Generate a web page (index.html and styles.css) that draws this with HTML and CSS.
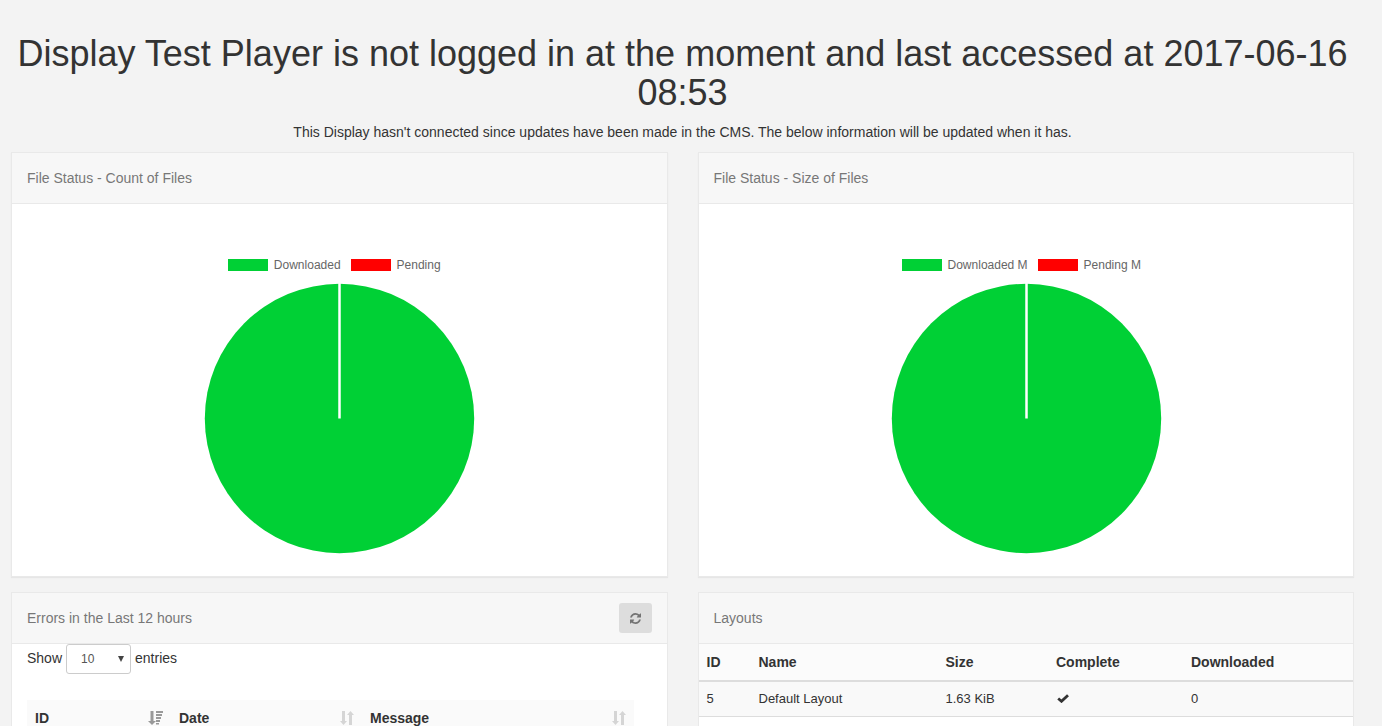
FILE: index.html
```html
<!DOCTYPE html>
<html lang="en">
<head>
<meta charset="utf-8">
<title>Display Test Player</title>
<link rel="stylesheet" href="styles.css">
</head>
<body>
<main class="page">
  <header class="intro">
    <h1 class="title">Display Test Player is not logged in at the moment and last accessed at 2017-06-16 08:53</h1>
    <p class="note">This Display hasn't connected since updates have been made in the CMS. The below information will be updated when it has.</p>
  </header>
  <div class="grid">
    <section class="widget chart-widget">
      <div class="widget-title">File Status - Count of Files</div>
      <div class="chart">
        <div class="legend">
          <span class="key"><i class="swatch green"></i>Downloaded</span>
          <span class="key"><i class="swatch red"></i>Pending</span>
        </div>
        <svg class="pie" viewBox="0 0 271 271"><circle cx="135.5" cy="135.5" r="134.7" fill="#00d035"/><path d="M135.5 0V135.5" stroke="#fff" stroke-width="2.5"/></svg>
      </div>
    </section>
    <section class="widget chart-widget">
      <div class="widget-title">File Status - Size of Files</div>
      <div class="chart chart-size">
        <div class="legend">
          <span class="key"><i class="swatch green"></i>Downloaded M</span>
          <span class="key"><i class="swatch red"></i>Pending M</span>
        </div>
        <svg class="pie" viewBox="0 0 271 271"><circle cx="135.5" cy="135.5" r="134.7" fill="#00d035"/><path d="M135.5 0V135.5" stroke="#fff" stroke-width="2.5"/></svg>
      </div>
    </section>
    <section class="widget list-widget">
      <div class="widget-title">Errors in the Last 12 hours
        <button class="refresh" type="button" aria-label="Refresh"><svg width="11" height="11" viewBox="0 0 1536 1536"><path fill="#737373" d="M1511 928q0 5-1 7-64 268-268 434.500T764 1536q-146 0-282.500-55T238 1324l-129 129q-19 19-45 19t-45-19-19-45V960q0-26 19-45t45-19h448q26 0 45 19t19 45-19 45l-137 137q71 66 161 102t187 36q134 0 250-65t186-179q11-17 53-117 8-23 30-23h192q13 0 22.500 9.500t9.500 22.500zM1536 128v448q0 26-19 45t-45 19h-448q-26 0-45-19t-19-45 19-45l138-138Q969 256 768 256q-134 0-250 65T332 500q-11 17-53 117-8 23-30 23H50q-13 0-22.500-9.500T18 608v-7q65-268 270-434.500T768 0q146 0 284 55.500T1297 212l130-129q19-19 45-19t45 19 19 45z"/></svg></button>
      </div>
      <div class="length">Show <span class="select">10<svg class="caret" width="6" height="6" viewBox="0 0 6 6"><path d="M0 0H6L3 6Z" fill="#444"/></svg></span> entries</div>
      <table class="errors">
        <colgroup><col class="e-id"><col class="e-date"><col class="e-msg"></colgroup>
        <tr>
          <th><div class="sortable">ID<svg class="sort" width="15" height="14" viewBox="0 0 15 14"><path fill="#999" d="M2.500 0H5.500V10H8L4 14L0 10H2.500ZM8 0H15V2H8ZM8 3H14V5H8ZM8 6H13V8H8ZM8 9H12V11H8ZM8 12H11V13.500H8Z"/></svg></div></th>
          <th><div class="sortable">Date<svg class="sort" width="14" height="14" viewBox="0 0 14 14"><path fill="#d5d5d5" d="M2 0H5V10H7L3.500 14L0 10H2ZM9 14V4H7L10.500 0L14 4H12V14Z"/></svg></div></th>
          <th><div class="sortable">Message<svg class="sort" width="14" height="14" viewBox="0 0 14 14"><path fill="#d5d5d5" d="M2 0H5V10H7L3.500 14L0 10H2ZM9 14V4H7L10.500 0L14 4H12V14Z"/></svg></div></th>
        </tr>
      </table>
    </section>
    <section class="widget list-widget">
      <div class="widget-title">Layouts</div>
      <table class="layouts">
        <colgroup><col class="l-id"><col class="l-name"><col class="l-size"><col class="l-complete"><col></colgroup>
        <thead><tr><th>ID</th><th>Name</th><th>Size</th><th>Complete</th><th>Downloaded</th></tr></thead>
        <tbody>
          <tr class="odd"><td>5</td><td>Default Layout</td><td>1.63 KiB</td><td><svg class="check" width="12" height="9" viewBox="0 0 12 9"><path d="M1.200 4.500L4.500 7.300L11 1.200" fill="none" stroke="#333" stroke-width="2.800"/></svg></td><td>0</td></tr>
          <tr class="even"><td colspan="5"></td></tr>
        </tbody>
      </table>
    </section>
  </div>
</main>
</body>
</html>
```
FILE: styles.css
```css
* { box-sizing: border-box; }
body {
  margin: 0;
  background: #f3f3f3;
  color: #333;
  font: 14px/20px "Liberation Sans", Arial, sans-serif;
}
.page { width: 1343px; height: 726px; margin-left: 11px; padding-top: 34px; }
.intro { text-align: center; height: 118px; }
.title { margin: 0 0 10px; font-size: 36px; line-height: 39px; font-weight: 400; }
.note { margin: 0; }
.grid { display: grid; grid-template-columns: 1fr 1fr; gap: 15px 30px; align-items: start; }
.widget { background: #fff; border: 1px solid #e9e9e9; box-shadow: 0 1px 1px rgba(0, 0, 0, .05); }
.chart-widget { height: 425px; }
.list-widget { height: 134px; overflow: hidden; border-bottom: 0; box-shadow: none; }
.widget-title {
  display: flex;
  align-items: center;
  justify-content: space-between;
  height: 51px;
  padding: 0 15px;
  background: #f7f7f7;
  border-bottom: 1px solid #e9e9e9;
  color: #777;
}
.chart { display: flex; flex-direction: column; align-items: center; padding-top: 55px; }
.chart-size { padding-left: 1px; }
.legend { display: flex; height: 12px; font-size: 12px; line-height: 12px; color: #666; }
.key { display: flex; align-items: center; margin-right: 10px; }
.swatch { width: 40px; height: 12px; margin-right: 6px; }
.green { background: #00d035; }
.red { background: #f00; }
.pie { width: 271px; height: 271px; margin-top: 12px; }
.refresh {
  display: flex;
  align-items: center;
  justify-content: center;
  width: 33px;
  height: 30px;
  padding: 0;
  border: 0;
  border-radius: 3px;
  background: #ddd;
}
.length { display: flex; gap: 4px; height: 56px; padding-left: 15px; line-height: 29px; }
.select {
  display: flex;
  align-items: center;
  justify-content: space-between;
  width: 65px;
  height: 30px;
  padding: 0 6px 0 14px;
  border: 1px solid #ccc;
  border-radius: 3px;
  font-size: 12px;
  color: #555;
}
table { border-collapse: collapse; table-layout: fixed; }
th, td { padding: 0 8px; text-align: left; }
.errors { width: 607px; margin-left: 15px; background: #fafafa; }
.errors th { height: 36px; padding-bottom: 1px; }
.errors th { height: 35px; padding: 0 8px; }
.e-id { width: 144px; }
.e-date { width: 191px; }
.e-msg { width: 272px; }
.sortable { display: flex; align-items: center; justify-content: space-between; height: 20px; margin-top: 1px; }
.layouts { width: 100%; border-collapse: separate; border-spacing: 0; }
.layouts th { height: 38px; padding-bottom: 1px; background: #fbfbfb; border-bottom: 2px solid #ddd; }
.layouts td { height: 34px; font-size: 13px; }
.layouts .even td { height: 10px; border-top: 1px solid #ddd; }
.odd td { background: #f9f9f9; }
.l-id { width: 52px; }
.l-name { width: 187px; }
.l-size { width: 110.5px; }
.l-complete { width: 135px; }
.check { display: block; margin: -1px 0 0 1px; }
```
